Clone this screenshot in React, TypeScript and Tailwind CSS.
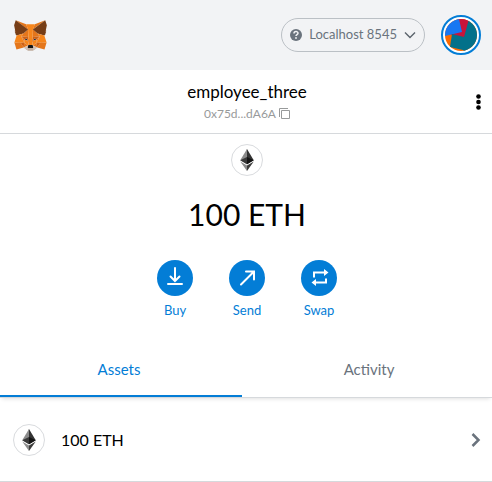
import React from "react";

const foxShapes: [string, string][] = [
  ["#E2761B", "274.1,35.5 174.6,109.4 193,65.8"],
  ["#E4761B", "44.4,35.5 143.1,110.1 125.6,65.8"],
  ["#E4761B", "238.3,206.8 211.8,247.4 268.5,263 284.8,207.7"],
  ["#E4761B", "33.9,207.7 50.1,263 106.8,247.4 80.3,206.8"],
  ["#E4761B", "103.6,138.2 87.8,162.1 144.1,164.6 142.1,104.1"],
  ["#E4761B", "214.9,138.2 175.9,103.4 174.6,164.6 230.8,162.1"],
  ["#E4761B", "106.8,247.4 140.6,230.9 111.4,208.1"],
  ["#E4761B", "177.9,230.9 211.8,247.4 207.1,208.1"],
  ["#D7C1B3", "211.8,247.4 177.9,230.9 180.6,253 180.3,262.3"],
  ["#D7C1B3", "106.8,247.4 138.3,262.3 138.1,253 140.6,230.9"],
  ["#233447", "138.8,193.5 110.6,185.2 130.5,176.1"],
  ["#233447", "179.7,193.5 188,176.1 208,185.2"],
  ["#CD6116", "106.8,247.4 111.6,206.8 80.3,207.7"],
  ["#CD6116", "207.1,206.8 211.8,247.4 238.3,207.7"],
  ["#CD6116", "230.8,162.1 174.6,164.6 179.8,193.5 188.1,176.1 208.1,185.2"],
  ["#CD6116", "110.6,185.2 130.6,176.1 138.8,193.5 144.1,164.6 87.8,162.1"],
  ["#E4751F", "87.8,162.1 111.4,208.1 110.6,185.2"],
  ["#E4751F", "208.1,185.2 207.1,208.1 230.8,162.1"],
  ["#E4751F", "144.1,164.6 138.8,193.5 145.4,227.6 146.9,182.7"],
  ["#E4751F", "174.6,164.6 171.9,182.6 173.1,227.6 179.8,193.5"],
  ["#F6851B", "179.8,193.5 173.1,227.6 177.9,230.9 207.1,208.1 208.1,185.2"],
  ["#F6851B", "110.6,185.2 111.4,208.1 140.6,230.9 145.4,227.6 138.8,193.5"],
  ["#C0AD9E", "180.3,262.3 180.6,253 178.1,250.8 140.4,250.8 138.1,253 138.3,262.3 106.8,247.4 117.8,256.4 140.1,271.9 178.4,271.9 200.8,256.4 211.8,247.4"],
  ["#161616", "177.9,230.9 173.1,227.6 145.4,227.6 140.6,230.9 138.1,253 140.4,250.8 178.1,250.8 180.6,253"],
  ["#763D16", "278.3,114.2 286.8,73.4 274.1,35.5 177.9,106.9 214.9,138.2 267.2,153.5 278.8,140 273.8,136.4 281.8,129.1 275.6,124.3 283.6,118.2"],
  ["#763D16", "31.8,73.4 40.3,114.2 34.9,118.2 42.9,124.3 36.8,129.1 44.8,136.4 39.8,140 51.3,153.5 103.6,138.2 140.6,106.9 44.4,35.5"],
  ["#F6851B", "267.2,153.5 214.9,138.2 230.8,162.1 207.1,208.1 238.3,207.7 284.8,207.7"],
  ["#F6851B", "103.6,138.2 51.3,153.5 33.9,207.7 80.3,207.7 111.4,208.1 87.8,162.1"],
  ["#F6851B", "174.6,164.6 177.9,106.9 193.1,65.8 125.6,65.8 140.6,106.9 144.1,164.6 145.3,182.8 145.4,227.6 173.1,227.6 173.3,182.8"],
];

function Fox() {
  return (
    <svg viewBox="31 35 257 237" className="h-[31px] w-[33px]" aria-hidden="true">
      {foxShapes.map(([fill, points]) => (
        <polygon key={points} fill={fill} points={points} />
      ))}
    </svg>
  );
}

function EthToken() {
  return (
    <span className="flex size-8 shrink-0 items-center justify-center rounded-full border border-[#d9dbde] bg-white">
      <svg viewBox="0 0 256 417" className="h-[22px] w-[14px]" aria-hidden="true">
        <path fill="#343434" d="M128 0l-3 9v276l3 3 128-76z" />
        <path fill="#8c8c8c" d="M128 0L0 212l128 76V154z" />
        <path fill="#3c3c3b" d="M128 312l-2 2v98l2 5 128-180z" />
        <path fill="#8c8c8c" d="M128 417V312L0 237z" />
        <path fill="#141414" d="M128 288l128-76-128-58z" />
        <path fill="#393939" d="M0 212l128 76V154z" />
      </svg>
    </span>
  );
}

function Identicon() {
  return (
    <svg viewBox="0 0 32 32" className="size-8 rounded-full" aria-hidden="true">
      <rect width="32" height="32" fill="#fb6a00" />
      <path fill="#c8143a" d="M13 0H25L20 19L6 16Z" />
      <path fill="#1877f2" d="M0 0H14L17 13L0 17Z" />
      <path fill="#03718a" d="M7 15L19 18L24 0H32V32H19L18 31L5 28Z" />
    </svg>
  );
}

const actions = [
  {
    label: "Buy",
    icon: <path d="M18 8v13M13.500 16.500l4.500 4.500 4.500-4.500M11 24h14" />,
  },
  {
    label: "Send",
    icon: <path d="M12 24.500L25 11.500M17 11.500h8v8" />,
  },
  {
    label: "Swap",
    icon: (
      <>
        <path strokeLinecap="butt" d="M13 17.500v-5h11M25 18.500v4H13" />
        <path fill="white" stroke="none" d="M23 9l4.500 3.500-4.500 3.500zM15 19l-4.500 3.500 4.500 3.500z" />
      </>
    ),
  },
];

export default function App() {
  return (
    <div className="bg-white font-[Lato,sans-serif] text-black">
      <header className="flex h-[70px] items-center justify-between bg-[#f2f3f5] pr-[11px] pl-[14px]">
        <button type="button" aria-label="Home">
          <Fox />
        </button>
        <div className="flex items-center gap-4">
          <button
            type="button"
            className="flex h-[34px] items-center rounded-full border border-[#bbc0c5] px-2 text-[13px] text-[#6a737d]"
          >
            <svg viewBox="0 0 12 12" className="size-3" aria-hidden="true">
              <circle cx="6" cy="6" r="6" fill="#6a737d" />
              <path d="M4 4.600C4 2 8 2 8 4.300C8 5.700 6 5.600 6 7" fill="none" stroke="#f2f3f5" strokeWidth="1.500" />
              <circle cx="6" cy="9" r="0.900" fill="#f2f3f5" />
            </svg>
            <span className="mx-[7px]">Localhost 8545</span>
            <svg viewBox="0 0 12 12" className="size-3" fill="none" stroke="#5b636c" strokeWidth="1.400" aria-hidden="true">
              <path d="M1 3.500l5 5 5-5" />
            </svg>
          </button>
          <button
            type="button"
            aria-label="Accounts"
            className="flex size-10 items-center justify-center rounded-full border-2 border-[#037dd6] bg-white"
          >
            <Identicon />
          </button>
        </div>
      </header>

      <section className="grid h-16 grid-cols-[1fr_auto_1fr] items-center border-b border-[#d6d9dc] pl-0.5">
        <button type="button" className="col-start-2 flex flex-col items-center">
          <span className="text-[17px] leading-6">employee_three</span>
          <span className="flex items-center gap-[3px] text-xs leading-5 text-[#989a9b]">
            0x75d...dA6A
            <svg viewBox="0 0 11 11" className="size-[11px]" fill="none" stroke="#989a9b" aria-hidden="true">
              <path d="M2.500 2.500h8v8h-8zM0.500 9V0.500H9" />
            </svg>
          </span>
        </button>
        <button type="button" aria-label="Account options" className="justify-self-end px-[11px]">
          <svg viewBox="0 0 5 16" className="h-4 w-[5px]" aria-hidden="true">
            <circle cx="2.500" cy="2.500" r="2.300" />
            <circle cx="2.500" cy="8" r="2.300" />
            <circle cx="2.500" cy="13.500" r="2.300" />
          </svg>
        </button>
      </section>

      <main>
        <section className="flex flex-col items-center pt-[10px] pl-0.5">
          <EthToken />
          <h1 className="mt-4 text-[30px] leading-[44px]">100 ETH</h1>
          <div className="mt-6 flex">
            {actions.map((action) => (
              <button
                key={action.label}
                type="button"
                className="flex w-[72px] flex-col items-center gap-1 text-[13px] leading-5 text-[#037dd6]"
              >
                <svg viewBox="0 0 36 36" className="size-9" fill="none" stroke="white" strokeWidth="2" strokeLinecap="round" aria-hidden="true">
                  <circle cx="18" cy="18" r="18" fill="#037dd6" stroke="none" />
                  {action.icon}
                </svg>
                {action.label}
              </button>
            ))}
          </div>
        </section>

        <div role="tablist" className="mt-6 flex h-[54px] border-b border-[#d6d9dc] text-[15px] shadow-[0_3px_4px_-2px_rgba(0,0,0,0.12)]">
          <button type="button" role="tab" aria-selected="true" className="flex-auto border-b-2 border-[#037dd6] pr-1 text-[#037dd6]">
            Assets
          </button>
          <button type="button" role="tab" aria-selected="false" className="flex-auto border-b-2 border-transparent pl-1 text-[#6a737d]">
            Activity
          </button>
        </div>

        <button type="button" className="flex h-[84px] w-full items-center gap-4 border-b border-[#d6d9dc] pr-[10px] pl-[13px]">
          <EthToken />
          <span className="flex-1 text-left text-base">100 ETH</span>
          <svg viewBox="0 0 12 16" className="h-4 w-3" fill="none" stroke="#6a737d" strokeWidth="2.500" aria-hidden="true">
            <path d="M2.500 2l6 6-6 6" />
          </svg>
        </button>
      </main>
    </div>
  );
}
